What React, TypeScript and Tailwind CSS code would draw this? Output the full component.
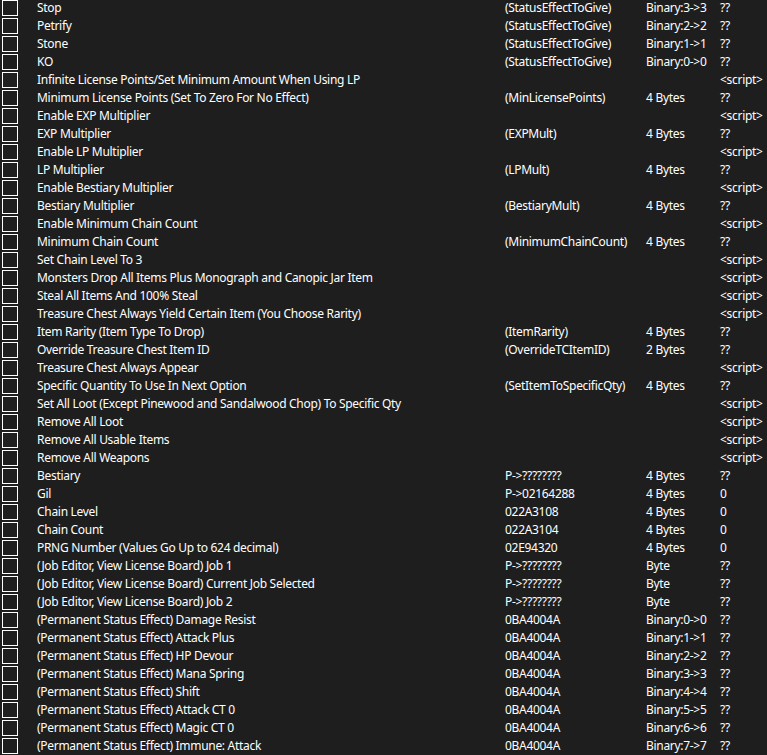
import React from 'react';

type Row = [string, string?, string?, string?];

const SCRIPT = '<script>';

const rows: Row[] = [
  ['Stop', '(StatusEffectToGive)', 'Binary:3->3', '??'],
  ['Petrify', '(StatusEffectToGive)', 'Binary:2->2', '??'],
  ['Stone', '(StatusEffectToGive)', 'Binary:1->1', '??'],
  ['KO', '(StatusEffectToGive)', 'Binary:0->0', '??'],
  ['Infinite License Points/Set Minimum Amount When Using LP', '', '', SCRIPT],
  ['Minimum License Points (Set To Zero For No Effect)', '(MinLicensePoints)', '4 Bytes', '??'],
  ['Enable EXP Multiplier', '', '', SCRIPT],
  ['EXP Multiplier', '(EXPMult)', '4 Bytes', '??'],
  ['Enable LP Multiplier', '', '', SCRIPT],
  ['LP Multiplier', '(LPMult)', '4 Bytes', '??'],
  ['Enable Bestiary Multiplier', '', '', SCRIPT],
  ['Bestiary Multiplier', '(BestiaryMult)', '4 Bytes', '??'],
  ['Enable Minimum Chain Count', '', '', SCRIPT],
  ['Minimum Chain Count', '(MinimumChainCount)', '4 Bytes', '??'],
  ['Set Chain Level To 3', '', '', SCRIPT],
  ['Monsters Drop All Items Plus Monograph and Canopic Jar Item', '', '', SCRIPT],
  ['Steal All Items And 100% Steal', '', '', SCRIPT],
  ['Treasure Chest Always Yield Certain Item (You Choose Rarity)', '', '', SCRIPT],
  ['Item Rarity (Item Type To Drop)', '(ItemRarity)', '4 Bytes', '??'],
  ['Override Treasure Chest Item ID', '(OverrideTCItemID)', '2 Bytes', '??'],
  ['Treasure Chest Always Appear', '', '', SCRIPT],
  ['Specific Quantity To Use In Next Option', '(SetItemToSpecificQty)', '4 Bytes', '??'],
  ['Set All Loot (Except Pinewood and Sandalwood Chop) To Specific Qty', '', '', SCRIPT],
  ['Remove All Loot', '', '', SCRIPT],
  ['Remove All Usable Items', '', '', SCRIPT],
  ['Remove All Weapons', '', '', SCRIPT],
  ['Bestiary', 'P->????????', '4 Bytes', '??'],
  ['Gil', 'P->02164288', '4 Bytes', '0'],
  ['Chain Level', '022A3108', '4 Bytes', '0'],
  ['Chain Count', '022A3104', '4 Bytes', '0'],
  ['PRNG Number (Values Go Up to 624 decimal)', '02E94320', '4 Bytes', '0'],
  ['(Job Editor, View License Board) Job 1', 'P->????????', 'Byte', '??'],
  ['(Job Editor, View License Board) Current Job Selected', 'P->????????', 'Byte', '??'],
  ['(Job Editor, View License Board) Job 2', 'P->????????', 'Byte', '??'],
  ['(Permanent Status Effect) Damage Resist', '0BA4004A', 'Binary:0->0', '??'],
  ['(Permanent Status Effect) Attack Plus', '0BA4004A', 'Binary:1->1', '??'],
  ['(Permanent Status Effect) HP Devour', '0BA4004A', 'Binary:2->2', '??'],
  ['(Permanent Status Effect) Mana Spring', '0BA4004A', 'Binary:3->3', '??'],
  ['(Permanent Status Effect) Shift', '0BA4004A', 'Binary:4->4', '??'],
  ['(Permanent Status Effect) Attack CT 0', '0BA4004A', 'Binary:5->5', '??'],
  ['(Permanent Status Effect) Magic CT 0', '0BA4004A', 'Binary:6->6', '??'],
  ['(Permanent Status Effect) Immune: Attack', '0BA4004A', 'Binary:7->7', '??'],
];

function CheatRow({ row }: { row: Row }) {
  const [desc, addr, type, value] = row;
  return (
    <div className="flex h-[18px] items-start whitespace-nowrap">
      <div className="ml-[2px] h-4 w-4 shrink-0 border border-white" />
      <div className="ml-[19px] w-[468px] shrink-0 overflow-hidden leading-4">{desc}</div>
      <div className="w-[141px] shrink-0 leading-4">{addr}</div>
      <div className="w-[74px] shrink-0 leading-4">{type}</div>
      <div className="leading-4">{value}</div>
    </div>
  );
}

export default function App() {
  return (
    <div
      className="h-[755px] w-[767px] overflow-hidden bg-[#1e1e1e] text-[12px] tracking-[-0.3px] text-white"
      style={{ fontFamily: '"Segoe UI", "Noto Sans", "Open Sans", sans-serif' }}
    >
      {rows.map((r, i) => (
        <CheatRow key={i} row={r} />
      ))}
    </div>
  );
}
